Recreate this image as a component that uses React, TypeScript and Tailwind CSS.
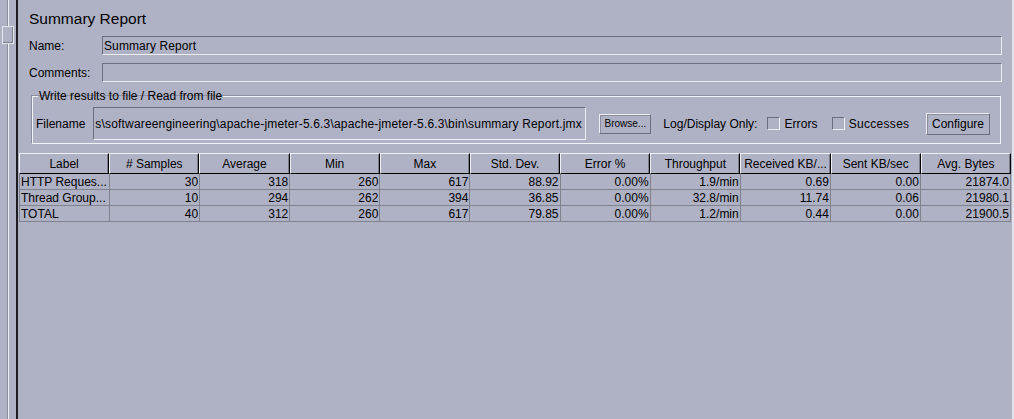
const columns = [
  'Label',
  '# Samples',
  'Average',
  'Min',
  'Max',
  'Std. Dev.',
  'Error %',
  'Throughput',
  'Received KB/...',
  'Sent KB/sec',
  'Avg. Bytes',
];

const rows = [
  ['HTTP Reques...', '30', '318', '260', '617', '88.92', '0.00%', '1.9/min', '0.69', '0.00', '21874.0'],
  ['Thread Group...', '10', '294', '262', '394', '36.85', '0.00%', '32.8/min', '11.74', '0.06', '21980.1'],
  ['TOTAL', '40', '312', '260', '617', '79.85', '0.00%', '1.2/min', '0.44', '0.00', '21900.5'],
];

function TextField({ value, className = '' }: { value?: string; className?: string }) {
  return (
    <div
      className={`flex items-center overflow-hidden whitespace-nowrap border border-t-[#6c6e7e] border-l-[#6c6e7e] border-r-[#eceef4] border-b-[#eceef4] pl-[1px] ${className}`}
    >
      {value}
    </div>
  );
}

function Checkbox() {
  return (
    <span className="inline-block h-[13px] w-[13px] border border-t-[#6c6e7e] border-l-[#6c6e7e] border-r-[#eceef4] border-b-[#eceef4]" />
  );
}

function Button({ label, className = '' }: { label: string; className?: string }) {
  return (
    <button
      className={`flex items-center justify-center border border-t-[#eceef4] border-l-[#eceef4] border-r-[#6c6e7e] border-b-[#6c6e7e] shadow-[inset_1px_1px_0_#8c8e9c] ${className}`}
    >
      {label}
    </button>
  );
}

function SliderStrip() {
  return (
    <div className="flex w-[16px] flex-col items-center">
      <div className="h-[26px] w-[2px] border-l border-l-[#8a8c9a] border-r border-r-[#eef0f6]" />
      <div className="h-[18px] w-[12px] border border-[#e4e6ee] shadow-[inset_-1px_-1px_0_#7c7e8e]" />
      <div className="w-[2px] flex-1 border-l border-l-[#8a8c9a] border-r border-r-[#eef0f6]" />
    </div>
  );
}

export default function App() {
  return (
    <div className="flex h-[419px] w-[1014px] overflow-hidden bg-[#afb2c5] font-['Liberation_Sans',Arial,sans-serif] text-[12px] leading-[14px] text-black">
      <SliderStrip />
      <div className="flex flex-1 flex-col border-l-2 border-l-[#1c1c22] border-r-2 border-r-[#e2e4ec]">
        <div className="pl-[11px] pr-[10px]">
          <h1 className="mt-[10px] h-[18px] text-[15.5px] leading-[18px]">Summary Report</h1>
          <div className="mt-[8px] flex h-[19px] items-center">
            <span className="w-[73px]">Name:</span>
            <TextField value="Summary Report" className="h-[19px] flex-1 tracking-[0.1px]" />
          </div>
          <div className="mt-[8px] flex h-[19px] items-center">
            <span className="w-[73px]">Comments:</span>
            <TextField className="h-[19px] flex-1" />
          </div>
        </div>

        <fieldset className="ml-[14px] mr-[11px] mt-[7px] border border-[#f2f3f8] pb-[3px] pl-[3px] pr-[10px] pt-[4px] shadow-[-1px_-1px_0_#8c8e9e]">
          <legend className="ml-[2px] px-[1px] leading-[14px]">Write results to file / Read from file</legend>
          <div className="flex h-[33px] items-center">
            <span>Filename</span>
            <TextField
              value="s\softwareengineering\apache-jmeter-5.6.3\apache-jmeter-5.6.3\bin\summary Report.jmx"
              className="ml-[8px] h-[33px] w-[493px] tracking-[0.17px]"
            />
            <Button label="Browse..." className="ml-[13px] h-[20px] w-[52px] text-[10px]" />
            <span className="ml-[12px]">Log/Display Only:</span>
            <span className="ml-[10px] flex items-center">
              <Checkbox />
            </span>
            <span className="ml-[4px] tracking-[0.1px]">Errors</span>
            <span className="ml-[14px] flex items-center">
              <Checkbox />
            </span>
            <span className="ml-[4px] tracking-[0.3px]">Successes</span>
            <Button label="Configure" className="ml-auto h-[22px] w-[64px]" />
          </div>
        </fieldset>

        <div className="ml-[1px] mt-[9px] w-[992px]">
          <div className="grid h-[21px] grid-cols-11">
            {columns.map((c) => (
              <div
                key={c}
                className="flex items-center justify-center overflow-hidden whitespace-nowrap border border-t-[#eef0f6] border-l-[#eef0f6] border-r-[#000] border-b-[#000] shadow-[inset_-1px_0_0_#7c7e8c]"
              >
                {c}
              </div>
            ))}
          </div>
          {rows.map((r) => (
            <div key={r[0]} className="grid h-[16px] grid-cols-11 border-l border-l-[#80828e]">
              {r.map((v, i) => (
                <div
                  key={i}
                  className={`flex items-center overflow-hidden whitespace-nowrap border-b border-r border-[#80828e] ${
                    i === 0 ? 'pl-[1px]' : 'justify-end pr-[1px]'
                  }`}
                >
                  {v}
                </div>
              ))}
            </div>
          ))}
        </div>
      </div>
    </div>
  );
}
